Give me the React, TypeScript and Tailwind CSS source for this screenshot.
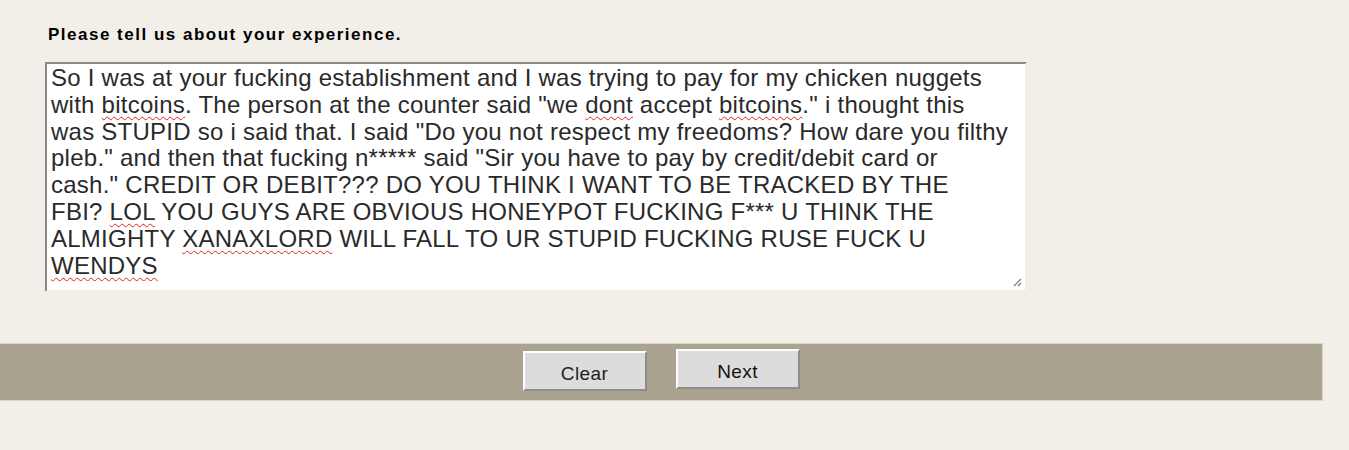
import React from "react";

const lines: React.ReactNode[] = [
  <>So I was at your fucking establishment and I was trying to pay for my chicken nuggets</>,
  <>
    with <Sq>bitcoins</Sq>. The person at the counter said "we <Sq>dont</Sq> accept <Sq>bitcoins</Sq>." i thought this
  </>,
  <>was STUPID so i said that. I said "Do you not respect my freedoms? How dare you filthy</>,
  <>pleb." and then that fucking n***** said "Sir you have to pay by credit/debit card or</>,
  <>cash." CREDIT OR DEBIT??? DO YOU THINK I WANT TO BE TRACKED BY THE</>,
  <>
    FBI? <Sq>LOL</Sq> YOU GUYS ARE OBVIOUS HONEYPOT FUCKING F*** U THINK THE
  </>,
  <>
    ALMIGHTY <Sq>XANAXLORD</Sq> WILL FALL TO UR STUPID FUCKING RUSE FUCK U
  </>,
  <>
    <Sq>WENDYS</Sq>
  </>,
];

function Sq({ children }: { children: React.ReactNode }) {
  return (
    <span className="underline decoration-wavy decoration-[#e02020] decoration-1 underline-offset-[3px]">
      {children}
    </span>
  );
}

export default function App() {
  return (
    <div className="w-[1349px] h-[450px] bg-[#f2efe9] font-['Liberation_Sans'] overflow-hidden">
      {/* Question */}
      <div className="pl-[48px] pt-[25px]">
        <p className="font-['Liberation_Sans'] text-[17px] tracking-[1.5px] font-bold text-black leading-[20px]">
          Please tell us about your experience.
        </p>
        <div className="relative mt-[17px] -ml-[3px] w-[982px] h-[230px] bg-white border-2 border-t-[#8a8a8a] border-l-[#8a8a8a] border-r-[#f2efe9] border-b-[#f2efe9] px-[4px] pt-[1px]">
          <div className="font-['Liberation_Sans'] text-[24px] tracking-[0.25px] leading-[26.8px] text-[#2a2a2a] whitespace-nowrap">
            {lines.map((l, i) => (
              <div key={i}>{l}</div>
            ))}
          </div>
          {/* resize grip */}
          <svg
            className="absolute right-[3px] bottom-[3px]"
            width="10"
            height="10"
            viewBox="0 0 10 10"
          >
            <path d="M9 2 L2 9 M9 6 L6 9" stroke="#777" strokeWidth="1.2" />
          </svg>
        </div>
      </div>

      {/* Footer bar */}
      <div className="mt-[51px] w-[1323px] h-[58px] bg-[#aaa390] border border-l-0 border-[#d9d4c6] flex items-start justify-center gap-[29px]">
        <button className="font-['Liberation_Sans'] mt-[7px] w-[124px] h-[40px] bg-[#dcdcdc] border-2 border-t-white border-l-white border-r-[#8c8c8c] border-b-[#8c8c8c] text-[19px] tracking-[0.4px] leading-[22px] text-[#222] pt-[5px]">
          Clear
        </button>
        <button className="font-['Liberation_Sans'] mt-[5px] w-[124px] h-[40px] bg-[#dcdcdc] border-2 border-t-white border-l-white border-r-[#8c8c8c] border-b-[#8c8c8c] text-[19px] tracking-[0.4px] leading-[22px] text-[#111] pt-[5px]">
          Next
        </button>
      </div>
    </div>
  );
}
